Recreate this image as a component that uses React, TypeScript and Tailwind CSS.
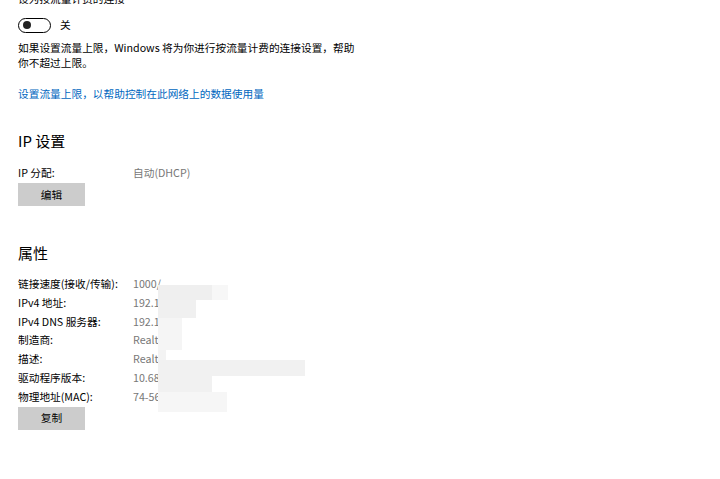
import React from 'react';

const font = { fontFamily: '"Noto Sans CJK SC", "Noto Sans", sans-serif' };

const props = [
  { label: '链接速度(接收/传输):', value: '1000/' },
  { label: 'IPv4 地址:', value: '192.16' },
  { label: 'IPv4 DNS 服务器:', value: '192.16' },
  { label: '制造商:', value: 'Realte' },
  { label: '描述:', value: 'Realte' },
  { label: '驱动程序版本:', value: '10.68.' },
  { label: '物理地址(MAC):', value: '74-56' },
];

function Toggle() {
  return (
    <div className="flex items-center gap-[9px]">
      <div className="w-[33px] h-[15px] rounded-full border-[1.5px] border-black flex items-center pl-[4px]">
        <div className="w-[8px] h-[8px] rounded-full bg-[#222]" />
      </div>
      <span className="text-[10.7px] text-black">关</span>
    </div>
  );
}

function Button({ children }: { children: React.ReactNode }) {
  return (
    <button className="w-[67px] h-[23px] bg-[#cccccc] text-[10.7px] text-black flex items-center justify-center">
      {children}
    </button>
  );
}

export default function App() {
  return (
    <div className="w-[720px] h-[479px] bg-white overflow-hidden relative" style={font}>
      <div className="pl-[18px] flex flex-col">
        <div className="text-[10.7px] text-black leading-[14px] -mt-[8px]">设为按流量计费的连接</div>
        <div className="mt-[11px]">
          <Toggle />
        </div>
        <p className="mt-[7px] text-[10.7px] leading-[15px] text-black w-[345px]">
          如果设置流量上限，Windows 将为你进行按流量计费的连接设置，帮助你不超过上限。
        </p>
        <a className="mt-[16px] text-[10.7px] leading-[15px] text-[#0067c0]">设置流量上限，以帮助控制在此网络上的数据使用量</a>

        <h2 className="mt-[30px] text-[15px] leading-[20px] text-black">IP 设置</h2>
        <div className="mt-[14px] flex text-[10.7px] leading-[15px]">
          <span className="w-[115px] text-black">IP 分配:</span>
          <span className="text-[#777]">自动(DHCP)</span>
        </div>
        <div className="mt-[3px]">
          <Button>编辑</Button>
        </div>

        <h2 className="mt-[37px] text-[15px] leading-[20px] text-black">属性</h2>
        <div className="mt-[13px] flex flex-col">
          {props.map((p) => (
            <div key={p.label} className="flex text-[10.7px] leading-[15px] h-[18.8px]">
              <span className="w-[115px] text-black">{p.label}</span>
              <span className="text-[#777]">{p.value}</span>
            </div>
          ))}
        </div>
        <div className="mt-[-1px]">
          <Button>复制</Button>
        </div>
      </div>

      {/* mosaic over the values */}
      <div className="absolute left-[158px] top-[285px] w-[54px] h-[15px] bg-[#efefef]" />
      <div className="absolute left-[212px] top-[285px] w-[16px] h-[15px] bg-[#f7f7f7]" />
      <div className="absolute left-[158px] top-[300px] w-[38px] h-[18px] bg-[#f0f0f0]" />
      <div className="absolute left-[158px] top-[318px] w-[24px] h-[32px] bg-[#f5f5f5]" />
      <div className="absolute left-[158px] top-[350px] w-[8px] h-[10px] bg-[#f3f3f3]" />
      <div className="absolute left-[158px] top-[360px] w-[147px] h-[16px] bg-[#f1f1f1]" />
      <div className="absolute left-[158px] top-[376px] w-[54px] h-[16px] bg-[#f1f1f1]" />
      <div className="absolute left-[158px] top-[392px] w-[69px] h-[20px] bg-[#f6f6f6]" />
    </div>
  );
}
